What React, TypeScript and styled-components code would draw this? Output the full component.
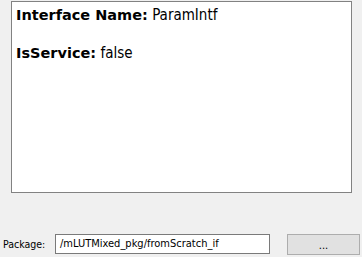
import React from "react";
import styled, { createGlobalStyle } from "styled-components";

const Global = createGlobalStyle`
  html, body { margin: 0; padding: 0; background: #f0f0f0; }
  body { width: 362px; height: 257px; overflow: hidden; font-family: "DejaVu Sans Condensed", "DejaVu Sans", sans-serif; }
`;

const Page = styled.div`
  display: flex;
  flex-direction: column;
  width: 362px;
  height: 257px;
  box-sizing: border-box;
  padding: 1px 0 0 11px;
`;

const Panel = styled.div`
  width: 341px;
  height: 192px;
  box-sizing: border-box;
  background: #ffffff;
  border: 1px solid #828282;
  padding: 4px 0 0 4px;
  display: flex;
  flex-direction: column;
  gap: 20px;
`;

const Line = styled.div`
  font-size: 15px;
  line-height: 18px;
  color: #000;
`;

const Key = styled.b`
  font-family: "DejaVu Sans", sans-serif;
  font-weight: bold;
  font-size: 14.5px;
`;

const Bottom = styled.div`
  display: flex;
  align-items: center;
  margin-top: 41px;
  margin-left: -8px;
  height: 20px;
`;

const Label = styled.span`
  font-size: 10.5px;
  color: #000;
  width: 52px;
`;

const Input = styled.div`
  width: 215px;
  height: 20px;
  box-sizing: border-box;
  border: 1px solid #7a7a7a;
  background: #fff;
  font-size: 11px;
  line-height: 18px;
  padding-left: 4px;
  color: #000;
`;

const Button = styled.div`
  margin-left: 17px;
  width: 73px;
  height: 21px;
  box-sizing: border-box;
  border: 1px solid #adadad;
  background: #e1e1e1;
  font-size: 11px;
  display: flex;
  align-items: center;
  justify-content: center;
  padding-top: 3px;
  color: #000;
`;

export default function App() {
  return (
    <>
      <Global />
      <Page>
        <Panel>
          <Line>
            <Key>Interface Name:</Key> ParamIntf
          </Line>
          <Line>
            <Key>IsService:</Key> false
          </Line>
        </Panel>
        <Bottom>
          <Label>Package:</Label>
          <Input>/mLUTMixed_pkg/fromScratch_if</Input>
          <Button>...</Button>
        </Bottom>
      </Page>
    </>
  );
}
